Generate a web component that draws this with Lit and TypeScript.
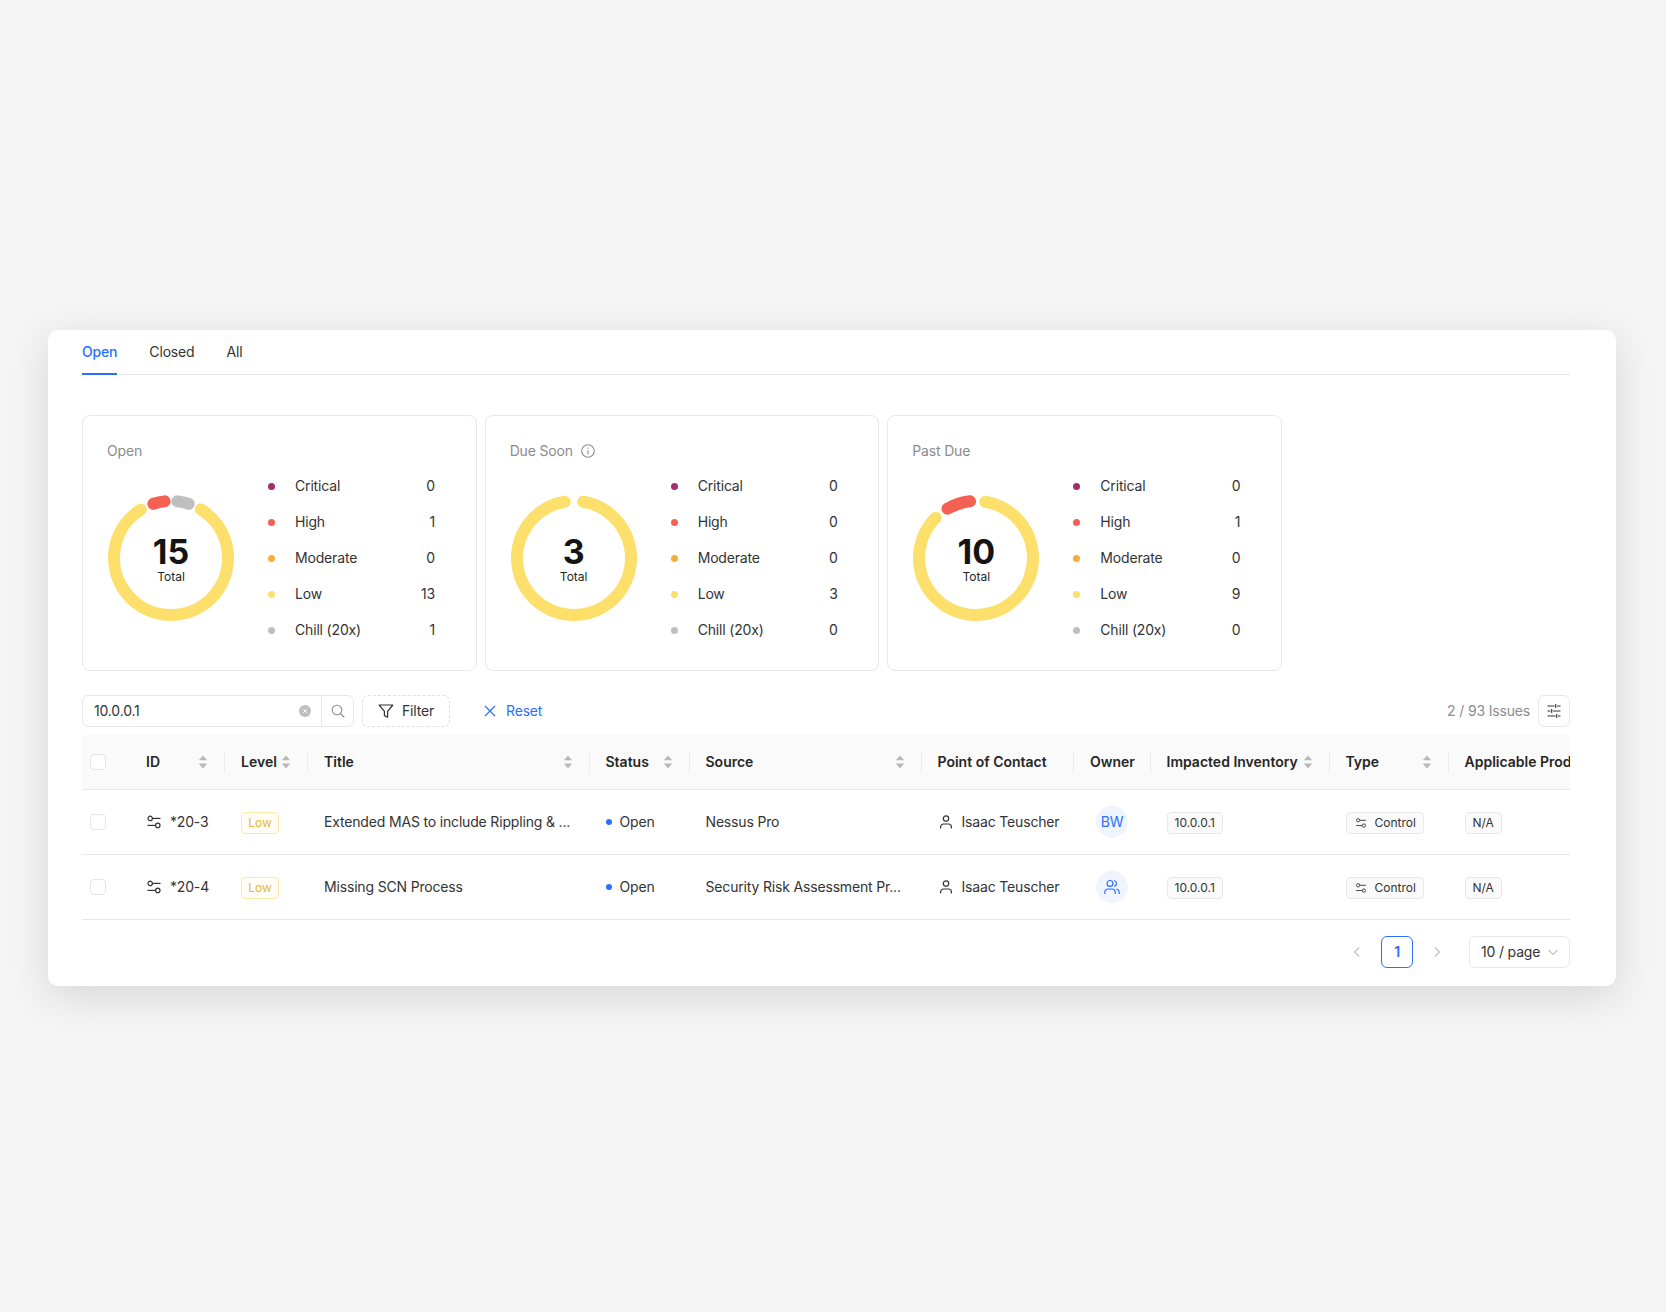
import { LitElement, html, svg, css } from "lit";
import { customElement } from "lit/decorators.js";

type Arc = { from: number; to: number; cls: string };
type Summary = { title: string; info?: boolean; total: number; values: number[]; arcs: Arc[] };

const LEVELS = [
  { name: "Critical", cls: "critical" },
  { name: "High", cls: "high" },
  { name: "Moderate", cls: "moderate" },
  { name: "Low", cls: "low" },
  { name: "Chill (20x)", cls: "chill" },
];

const SUMMARIES: Summary[] = [
  {
    title: "Open",
    total: 15,
    values: [0, 1, 0, 13, 1],
    arcs: [
      { from: 31.5, to: 328, cls: "low" },
      { from: 6.4, to: 18, cls: "chill" },
      { from: 342, to: 353.6, cls: "high" },
    ],
  },
  {
    title: "Due Soon",
    info: true,
    total: 3,
    values: [0, 0, 0, 3, 0],
    arcs: [{ from: 9.3, to: 350.7, cls: "low" }],
  },
  {
    title: "Past Due",
    total: 10,
    values: [0, 1, 0, 9, 0],
    arcs: [
      { from: 9.3, to: 315, cls: "low" },
      { from: 330, to: 354, cls: "high" },
    ],
  },
];

const COLUMNS = [
  { label: "", w: 48 },
  { label: "ID", w: 95, sort: true },
  { label: "Level", w: 83, sort: true },
  { label: "Title", w: 281.5, sort: true },
  { label: "Status", w: 100, sort: true },
  { label: "Source", w: 232, sort: true },
  { label: "Point of Contact", w: 152.5 },
  { label: "Owner", w: 76.5 },
  { label: "Impacted Inventory", w: 179, sort: true },
  { label: "Type", w: 119, sort: true },
  { label: "Applicable Product", w: 121.5 },
];

const ROWS = [
  { id: "*20-3", title: "Extended MAS to include Rippling & ...", source: "Nessus Pro", owner: "BW" },
  { id: "*20-4", title: "Missing SCN Process", source: "Security Risk Assessment Pr...", owner: "" },
];

function arcPath(from: number, to: number) {
  const r = 57;
  const c = 63;
  const pt = (a: number) => {
    const t = (a * Math.PI) / 180;
    return `${(c + r * Math.sin(t)).toFixed(2)} ${(c - r * Math.cos(t)).toFixed(2)}`;
  };
  return `M${pt(from)}A${r} ${r} 0 ${to - from > 180 ? 1 : 0} 1 ${pt(to)}`;
}

const controlIcon = (size: number) => html`<svg class="ic-control" width=${size} height=${size} viewBox="0 0 16 16" fill="none" stroke="currentColor" stroke-width="1.2">
  <circle cx="4.2" cy="4.4" r="2.2"></circle><path d="M6.4 4.4H14.5"></path>
  <circle cx="11.8" cy="11.4" r="2.2"></circle><path d="M1.5 11.4h8.1"></path>
</svg>`;

const personIcon = html`<svg class="ic-person" width="16" height="16" viewBox="0 0 16 16" fill="none" stroke="currentColor" stroke-width="1.2" stroke-linecap="round">
  <circle cx="8" cy="4.6" r="2.7"></circle><path d="M2.6 14v-1a3 3 0 0 1 3-3h4.8a3 3 0 0 1 3 3v1"></path>
</svg>`;

const usersIcon = html`<svg width="18" height="18" viewBox="0 0 18 18" fill="none" stroke="currentColor" stroke-width="1.2" stroke-linecap="round">
  <circle cx="7" cy="5.4" r="2.9"></circle><path d="M1.8 15.4v-1.2a3.2 3.2 0 0 1 3.2-3.2h4a3.2 3.2 0 0 1 3.2 3.2v1.2"></path>
  <path d="M11.6 2.7a2.9 2.9 0 0 1 0 5.4M13.8 11.2a3.2 3.2 0 0 1 2.4 3v1.2"></path>
</svg>`;

const sortIcon = html`<svg class="sort" width="12" height="14" viewBox="0 0 12 14">
  <path d="M6 0.6 10.2 5.2H1.8z"></path><path d="M6 13.4 1.8 8.4h8.4z"></path>
</svg>`;

@customElement("app-root")
export class AppRoot extends LitElement {
  static styles = css`
    :host {
      display: block;
      width: 1666px;
      height: 1312px;
      overflow: hidden;
      background: #f5f5f5;
      font-family: Inter, "Liberation Sans", sans-serif;
      font-size: 14px;
      line-height: 22px;
      letter-spacing: -0.17px;
      color: #333;
    }
    * { box-sizing: border-box; }
    .page { padding: 330px 50px 0 48px; }
    .panel {
      width: 1568px;
      height: 656px;
      background: #fff;
      border-radius: 10px;
      padding: 0 46px 0 34px;
      box-shadow: 0 10px 44px rgba(0, 0, 0, 0.13);
    }
    .tabs {
      display: flex;
      gap: 32px;
      height: 45px;
      border-bottom: 1px solid #e8e8e8;
    }
    .tab { height: 45px; padding-top: 11px; color: #333; }
    .tab.active { color: #2970ff; border-bottom: 2px solid #2970ff; font-weight: 500; }

    .summaries { display: flex; gap: 8px; margin-top: 40px; }
    .summary {
      width: 394.67px;
      height: 256px;
      border: 1px solid #e8e8e8;
      border-radius: 8px;
      padding: 24px 24px 0 25px;
    }
    .summary-title { display: flex; align-items: center; gap: 8px; color: #8c8c8c; margin-left: -1px; }
    .info { color: #8c8c8c; display: block; }
    .summary-body { display: flex; align-items: center; height: 180px; margin-top: 6px; }
    .donut { display: grid; width: 126px; height: 126px; flex: none; }
    .donut > * { grid-area: 1 / 1; }
    .donut path { fill: none; stroke-width: 12; stroke-linecap: round; }
    .donut path.low { stroke: #fddf6c; }
    .donut path.high { stroke: #f46153; }
    .donut path.chill { stroke: #bfbfbf; }
    .donut-center {
      display: flex;
      flex-direction: column;
      align-items: center;
      justify-content: center;
      padding-top: 3px;
      letter-spacing: 0;
    }
    .donut-num { font-size: 34px; line-height: 34px; font-weight: 700; color: #141414; }
    .donut-label { font-size: 12px; line-height: 16px; color: #262626; }
    .legend { width: 167px; margin-left: 34px; }
    .legend-row { display: flex; align-items: center; height: 36px; }
    .dot { width: 7px; height: 7px; border-radius: 50%; margin-right: 20px; flex: none; }
    .dot.critical { background: #a52c6d; }
    .dot.high { background: #f46153; }
    .dot.moderate { background: #f9ad3d; }
    .dot.low { background: #fddf6c; }
    .dot.chill { background: #bfbfbf; }
    .legend-name { flex: 1; }

    .toolbar { display: flex; align-items: center; height: 32px; margin-top: 24px; }
    .search {
      display: flex;
      width: 272px;
      height: 32px;
      border: 1px solid #e8e8e8;
      border-radius: 6px;
    }
    .search-input {
      display: flex;
      align-items: center;
      justify-content: space-between;
      width: 239px;
      padding: 0 10px 0 11px;
      border-right: 1px solid #e8e8e8;
    }
    .search-btn { flex: 1; display: flex; align-items: center; justify-content: center; color: #8c8c8c; }
    .filter {
      display: flex;
      align-items: center;
      gap: 8px;
      width: 88px;
      height: 32px;
      margin-left: 8px;
      padding-left: 15px;
      border: 1px dashed #e0e0e0;
      border-radius: 6px;
    }
    .reset { display: flex; align-items: center; gap: 9px; margin-left: 33px; color: #2970ff; }
    .toolbar-right { display: flex; align-items: center; gap: 8px; margin-left: auto; color: #8c8c8c; }
    .settings {
      display: flex;
      align-items: center;
      justify-content: center;
      width: 32px;
      height: 32px;
      border: 1px solid #e8e8e8;
      border-radius: 6px;
      color: #333;
    }

    .table-wrap { width: 1488px; margin-top: 8px; overflow: hidden; }
    table { table-layout: fixed; border-collapse: separate; border-spacing: 0; width: 1488px; }
    th {
      position: relative;
      height: 55px;
      padding: 0 16px;
      background: #fafafa;
      border-bottom: 1px solid #e8e8e8;
      font-weight: 600;
      letter-spacing: 0;
      color: #262626;
      text-align: left;
      white-space: nowrap;
    }
    th.divided::after {
      content: "";
      position: absolute;
      right: 0;
      top: 16px;
      width: 1px;
      height: 22px;
      background: #ececec;
    }
    th .head { display: flex; align-items: center; justify-content: space-between; }
    .sort { fill: #b8b8b8; flex: none; }
    td {
      height: 65px;
      padding: 0 16px;
      border-bottom: 1px solid #e8e8e8;
      white-space: nowrap;
    }
    th.check, td.check { padding: 0 0 0 8px; }
    .checkbox {
      display: block;
      width: 16px;
      height: 16px;
      background: #fff;
      border: 1px solid #e4e4e4;
      border-radius: 4px;
    }
    .cell { display: flex; align-items: center; }
    .id-cell { gap: 8px; }
    .ic-control, .ic-person { flex: none; }
    .level {
      display: flex;
      align-items: center;
      justify-content: center;
      width: 38px;
      height: 22px;
      margin-top: 1px;
      font-size: 12px;
      letter-spacing: 0;
      color: #e5b735;
      background: #fffdf5;
      border: 1px solid #fde9a9;
      border-radius: 4px;
    }
    .status-dot { width: 6px; height: 6px; border-radius: 50%; background: #2970ff; margin-right: 8px; }
    .poc { gap: 8px; }
    .avatar {
      display: flex;
      align-items: center;
      justify-content: center;
      width: 32px;
      height: 32px;
      margin-left: 6px;
      border-radius: 50%;
      background: #eff4ff;
      color: #2970ff;
    }
    .tag {
      display: flex;
      align-items: center;
      height: 22px;
      margin-top: 1px;
      padding: 0 7px;
      font-size: 12px;
      letter-spacing: 0;
      color: #333;
      background: #fafafa;
      border: 1px solid #e8e8e8;
      border-radius: 4px;
    }
    .tag.control { gap: 8px; padding: 0 7px 0 8px; }

    .pager { display: flex; align-items: center; justify-content: flex-end; margin-top: 16px; }
    .arrow { display: flex; align-items: center; justify-content: center; width: 32px; height: 32px; color: #bfbfbf; }
    .page-btn {
      width: 32px;
      height: 32px;
      margin: 0 8px;
      display: flex;
      align-items: center;
      justify-content: center;
      color: #2970ff;
      font-weight: 600;
      border: 1px solid #2970ff;
      border-radius: 6px;
    }
    .size {
      display: flex;
      align-items: center;
      justify-content: space-between;
      width: 101px;
      height: 32px;
      margin-left: 16px;
      padding: 0 10px 0 11px;
      border: 1px solid #e8e8e8;
      border-radius: 6px;
    }
    .size svg { color: #bfbfbf; }
  `;

  private summary(s: Summary) {
    return html`<div class="summary">
      <div class="summary-title">
        <span>${s.title}</span>
        ${s.info
          ? html`<svg class="info" width="14" height="14" viewBox="0 0 14 14" fill="none" stroke="currentColor" stroke-width="1.1">
              <circle cx="7" cy="7" r="6.3"></circle><path d="M7 6.2v4"></path><path d="M7 3.6v1.2"></path>
            </svg>`
          : ""}
      </div>
      <div class="summary-body">
        <div class="donut">
          <svg width="126" height="126" viewBox="0 0 126 126">
            ${s.arcs.map((a) => svg`<path class=${a.cls} d=${arcPath(a.from, a.to)}></path>`)}
          </svg>
          <div class="donut-center">
            <div class="donut-num">${s.total}</div>
            <div class="donut-label">Total</div>
          </div>
        </div>
        <div class="legend">
          ${LEVELS.map(
            (l, i) => html`<div class="legend-row">
              <span class="dot ${l.cls}"></span>
              <span class="legend-name">${l.name}</span>
              <span>${s.values[i]}</span>
            </div>`
          )}
        </div>
      </div>
    </div>`;
  }

  render() {
    return html`<div class="page">
      <div class="panel">
        <div class="tabs">
          <div class="tab active">Open</div>
          <div class="tab">Closed</div>
          <div class="tab">All</div>
        </div>

        <div class="summaries">${SUMMARIES.map((s) => this.summary(s))}</div>

        <div class="toolbar">
          <div class="search">
            <div class="search-input">
              <span>10.0.0.1</span>
              <svg width="12" height="12" viewBox="0 0 12 12">
                <circle cx="6" cy="6" r="6" fill="#bfbfbf"></circle>
                <path d="M4.2 4.2l3.6 3.6M7.8 4.2l-3.6 3.6" stroke="#fff" stroke-width="1"></path>
              </svg>
            </div>
            <div class="search-btn">
              <svg width="14" height="14" viewBox="0 0 14 14" fill="none" stroke="currentColor" stroke-width="1.1">
                <circle cx="6" cy="6" r="4.8"></circle><path d="M9.5 9.5 13.3 13.3"></path>
              </svg>
            </div>
          </div>
          <div class="filter">
            <svg width="16" height="16" viewBox="0 0 16 16" fill="none" stroke="currentColor" stroke-width="1.2" stroke-linejoin="round">
              <path d="M1.2 2h13.6L9.6 8.4v5.8l-3.2-1.6V8.4z"></path>
            </svg>
            <span>Filter</span>
          </div>
          <div class="reset">
            <svg width="14" height="14" viewBox="0 0 14 14" fill="none" stroke="currentColor" stroke-width="1.2">
              <path d="M2 2l10 10M12 2 2 12"></path>
            </svg>
            <span>Reset</span>
          </div>
          <div class="toolbar-right">
            <span>2 / 93 Issues</span>
            <div class="settings">
              <svg width="16" height="16" viewBox="0 0 16 16" fill="none" stroke="currentColor" stroke-width="1.1">
                <path d="M1.5 3h7M11 3h3.5M9.7 1v4"></path>
                <path d="M1.5 8h3M7 8h7.5M5.7 6v4"></path>
                <path d="M1.5 13h8M12 13h2.5M10.7 11v4"></path>
              </svg>
            </div>
          </div>
        </div>

        <div class="table-wrap">
          <table>
            <colgroup>${COLUMNS.map((c) => html`<col style="width:${c.w}px" />`)}</colgroup>
            <thead>
              <tr>
                <th class="check"><span class="checkbox"></span></th>
                ${COLUMNS.slice(1).map(
                  (c, i) => html`<th class=${i < COLUMNS.length - 2 ? "divided" : ""}>
                    <div class="head"><span>${c.label}</span>${c.sort ? sortIcon : ""}</div>
                  </th>`
                )}
              </tr>
            </thead>
            <tbody>
              ${ROWS.map(
                (r) => html`<tr>
                  <td class="check"><span class="checkbox"></span></td>
                  <td><div class="cell id-cell">${controlIcon(16)}<span>${r.id}</span></div></td>
                  <td><div class="cell"><span class="level">Low</span></div></td>
                  <td>${r.title}</td>
                  <td><div class="cell"><span class="status-dot"></span><span>Open</span></div></td>
                  <td>${r.source}</td>
                  <td><div class="cell poc">${personIcon}<span>Isaac Teuscher</span></div></td>
                  <td><div class="avatar">${r.owner ? r.owner : usersIcon}</div></td>
                  <td><div class="cell"><span class="tag">10.0.0.1</span></div></td>
                  <td><div class="cell"><span class="tag control">${controlIcon(12)}<span>Control</span></span></div></td>
                  <td><div class="cell"><span class="tag">N/A</span></div></td>
                </tr>`
              )}
            </tbody>
          </table>
        </div>

        <div class="pager">
          <div class="arrow">
            <svg width="12" height="12" viewBox="0 0 12 12" fill="none" stroke="currentColor" stroke-width="1.1"><path d="M8.2 1.5 3.5 6l4.7 4.5"></path></svg>
          </div>
          <div class="page-btn">1</div>
          <div class="arrow">
            <svg width="12" height="12" viewBox="0 0 12 12" fill="none" stroke="currentColor" stroke-width="1.1"><path d="M3.8 1.5 8.5 6l-4.7 4.5"></path></svg>
          </div>
          <div class="size">
            <span>10 / page</span>
            <svg width="12" height="12" viewBox="0 0 12 12" fill="none" stroke="currentColor" stroke-width="1.1"><path d="M1.5 3.8 6 8.5l4.5-4.7"></path></svg>
          </div>
        </div>
      </div>
    </div>`;
  }
}
